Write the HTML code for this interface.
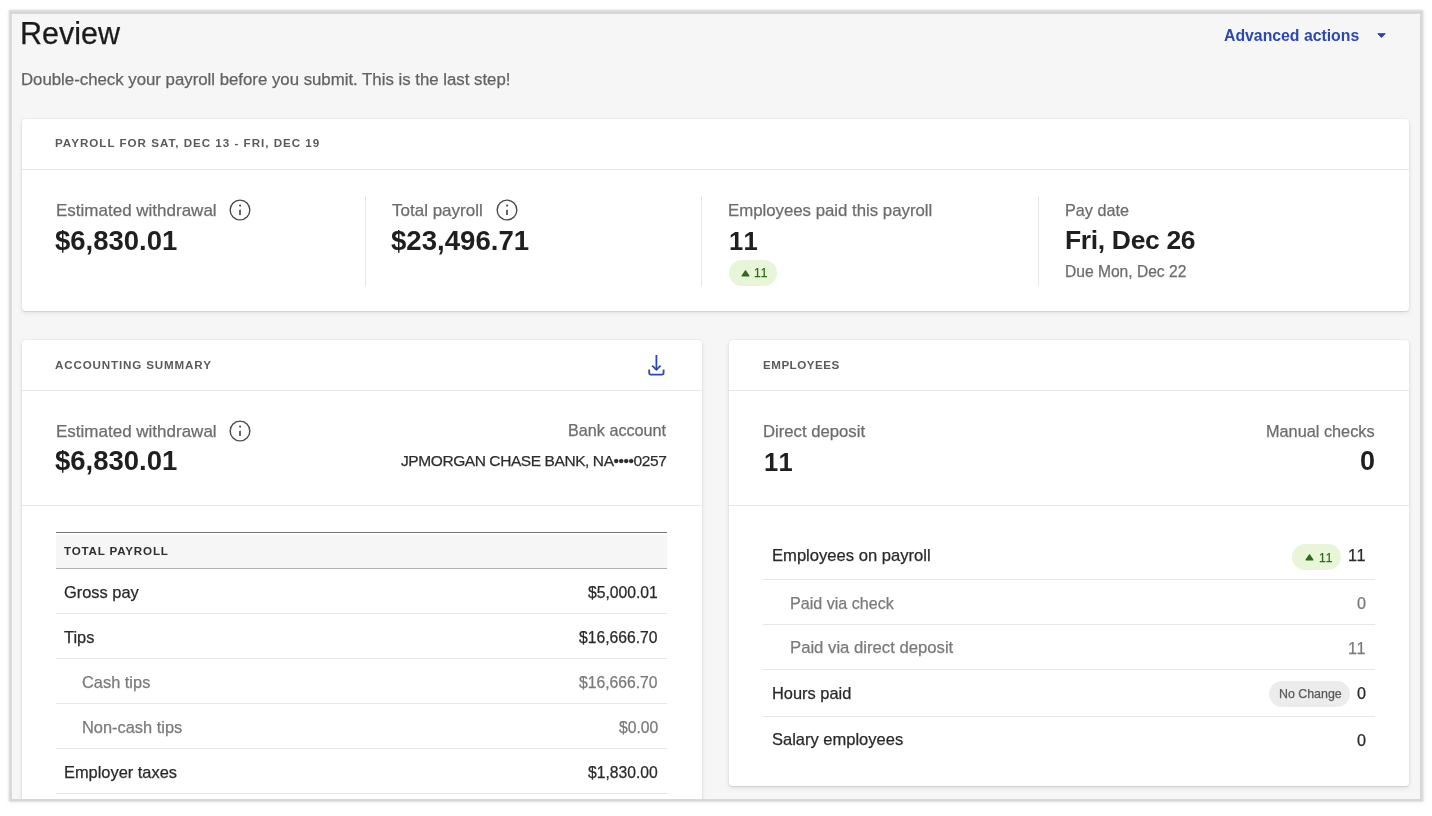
<!DOCTYPE html>
<html><head><meta charset="utf-8">
<style>
html,body{margin:0;padding:0;}
body{width:1432px;height:816px;position:relative;overflow:hidden;background:#fff;font-family:"Liberation Sans",sans-serif;}
.t{position:absolute;white-space:nowrap;will-change:transform;-webkit-text-stroke:0.25px currentColor;}
.r{position:absolute;}
.panel{position:absolute;left:12px;top:14px;width:1408px;height:785px;background:#f6f6f6;overflow:hidden;
 box-shadow:0 0 0 2.5px #d8d8d8, 0 -1px 1.5px 3px #dcdcdc, 0 -1px 3px 3.5px rgba(0,0,0,0.07), 0 0 4px 4px rgba(0,0,0,0.04);}
.card{position:absolute;background:#fff;border-radius:3.5px;box-shadow:0 1px 1px rgba(0,0,0,0.07),0 2px 5px rgba(0,0,0,0.09),0 0 2px rgba(0,0,0,0.09);}
.ico{position:absolute;}
</style></head><body>
<div class="panel"></div>
<div class="card" style="left:22px;top:119px;width:1387px;height:192px;"></div>
<div style="position:absolute;left:0;top:0;width:1432px;height:799px;overflow:hidden;"><div class="card" style="left:22px;top:340px;width:680px;height:520px;"></div></div>
<div class="card" style="left:729px;top:340px;width:680px;height:446px;"></div>
<div class="t" style="top:14.47px;font-size:30.5px;line-height:38.12px;color:#1b1b1b;left:20.20px;">Review</div>
<div class="t" style="top:68.68px;font-size:16.8px;line-height:21.0px;color:#626262;left:20.50px;">Double-check your payroll before you submit. This is the last step!</div>
<div class="t" style="top:25.65px;font-size:15.8px;line-height:19.75px;color:#2c48b0;font-weight:700;-webkit-text-stroke:0;left:1224.00px;">Advanced actions</div>
<svg class="ico" style="left:1376px;top:32px" width="11" height="7" viewBox="0 0 11 7"><path d="M1.8 1.7 L9.2 1.7 L5.5 5.5 Z" fill="#2c48b0" stroke="#2c48b0" stroke-width="1" stroke-linejoin="round"/></svg>
<div class="t" style="top:136.33px;font-size:11.6px;line-height:14.5px;color:#5a5a5a;font-weight:700;-webkit-text-stroke:0;letter-spacing:1.0px;left:55.00px;">PAYROLL FOR SAT, DEC 13 - FRI, DEC 19</div>
<div class="r" style="left:22px;top:169px;width:1387px;height:1px;background:#e6e6e6;"></div>
<div class="r" style="left:365px;top:196px;width:1px;height:90px;background:#e6e6e6;"></div>
<div class="r" style="left:701px;top:196px;width:1px;height:90px;background:#e6e6e6;"></div>
<div class="r" style="left:1038px;top:196px;width:1px;height:90px;background:#e6e6e6;"></div>
<div class="t" style="top:200.48px;font-size:17px;line-height:21.25px;color:#6c6c6c;left:55.50px;">Estimated withdrawal</div>
<svg class="ico" style="left:229.1px;top:198.6px" width="22" height="22" viewBox="0 0 22 22"><circle cx="11" cy="11" r="9.85" fill="none" stroke="#4a4a4a" stroke-width="1.4"/><path d="M10.15 10.9 L11.85 10.6 L11.85 16.1 L10.15 16.1 Z" fill="#4a4a4a"/><circle cx="11.1" cy="6.6" r="1.05" fill="#4a4a4a"/></svg>
<div class="t" style="top:200.48px;font-size:17px;line-height:21.25px;color:#6c6c6c;left:392.00px;">Total payroll</div>
<svg class="ico" style="left:495.8px;top:198.6px" width="22" height="22" viewBox="0 0 22 22"><circle cx="11" cy="11" r="9.85" fill="none" stroke="#4a4a4a" stroke-width="1.4"/><path d="M10.15 10.9 L11.85 10.6 L11.85 16.1 L10.15 16.1 Z" fill="#4a4a4a"/><circle cx="11.1" cy="6.6" r="1.05" fill="#4a4a4a"/></svg>
<div class="t" style="top:199.68px;font-size:16.8px;line-height:21.0px;color:#6c6c6c;left:728.00px;">Employees paid this payroll</div>
<div class="t" style="top:199.86px;font-size:16.2px;line-height:20.25px;color:#6c6c6c;left:1065.00px;">Pay date</div>
<div class="t" style="top:223.78px;font-size:27.5px;line-height:34.38px;color:#1f1f1f;font-weight:700;-webkit-text-stroke:0;left:54.50px;">$6,830.01</div>
<div class="t" style="top:223.69px;font-size:27.6px;line-height:34.5px;color:#1f1f1f;font-weight:700;-webkit-text-stroke:0;left:391.00px;">$23,496.71</div>
<div class="t" style="top:225.82px;font-size:25.5px;line-height:31.88px;color:#1f1f1f;font-weight:700;-webkit-text-stroke:0;letter-spacing:1.8px;left:729.00px;">11</div>
<div class="t" style="top:224.46px;font-size:26.5px;line-height:33.12px;color:#1f1f1f;font-weight:700;-webkit-text-stroke:0;letter-spacing:-0.35px;left:1064.50px;">Fri, Dec 26</div>
<div class="r" style="left:728.8px;top:260px;width:48px;height:26px;background:#e8f5d9;border-radius:13px;"></div>
<svg class="ico" style="left:741.3px;top:269.3px" width="10" height="9" viewBox="0 0 10 9"><path d="M1.1 6.9 L4.5 1.8 L7.9 6.9 Z" fill="#2e6a1d" stroke="#2e6a1d" stroke-width="1.2" stroke-linejoin="round"/></svg>
<div class="t" style="top:265.94px;font-size:12px;line-height:15.0px;color:#2e6a1d;letter-spacing:0.9px;left:754.00px;">11</div>
<div class="t" style="top:262.14px;font-size:15.6px;line-height:19.5px;color:#6c6c6c;left:1065.00px;">Due Mon, Dec 22</div>
<div style="position:absolute;left:0;top:0;width:1432px;height:799px;overflow:hidden;">
<div class="t" style="top:358.23px;font-size:11.6px;line-height:14.5px;color:#5a5a5a;font-weight:700;-webkit-text-stroke:0;letter-spacing:0.86px;left:55.00px;">ACCOUNTING SUMMARY</div>
<svg class="ico" style="left:646px;top:352px" width="22" height="26" viewBox="0 0 22 26"><path d="M10.4 3 V17.5" stroke="#2c48b0" stroke-width="1.8" fill="none"/><path d="M6.2 13.6 L10.4 17.8 L14.6 13.6" stroke="#2c48b0" stroke-width="1.8" fill="none"/><path d="M3.2 17.5 V20.8 Q3.2 22.6 5 22.6 H15.8 Q17.6 22.6 17.6 20.8 V17.5" stroke="#2c48b0" stroke-width="1.8" fill="none"/></svg>
<div class="r" style="left:22px;top:390px;width:680px;height:1px;background:#e6e6e6;"></div>
<div class="t" style="top:421.28px;font-size:17px;line-height:21.25px;color:#6c6c6c;left:55.50px;">Estimated withdrawal</div>
<svg class="ico" style="left:229.3px;top:419.7px" width="22" height="22" viewBox="0 0 22 22"><circle cx="11" cy="11" r="9.85" fill="none" stroke="#4a4a4a" stroke-width="1.4"/><path d="M10.15 10.9 L11.85 10.6 L11.85 16.1 L10.15 16.1 Z" fill="#4a4a4a"/><circle cx="11.1" cy="6.6" r="1.05" fill="#4a4a4a"/></svg>
<div class="t" style="top:444.48px;font-size:27.5px;line-height:34.38px;color:#1f1f1f;font-weight:700;-webkit-text-stroke:0;left:55.00px;">$6,830.01</div>
<div class="t" style="top:420.26px;font-size:16.2px;line-height:20.25px;color:#6c6c6c;right:765.50px;">Bank account</div>
<div class="t" style="top:451.44px;font-size:15.5px;line-height:19.38px;color:#2e2e2e;letter-spacing:-0.42px;right:765.50px;margin-right:0.42px;">JPMORGAN CHASE BANK, NA&bull;&bull;&bull;&bull;0257</div>
<div class="r" style="left:22px;top:505px;width:680px;height:1px;background:#e6e6e6;"></div>
<div class="r" style="left:56px;top:532.1px;width:611px;height:1.2999999999999545px;background:#777777;"></div>
<div class="r" style="left:56px;top:535px;width:611px;height:33.200000000000045px;background:#f6f6f6;"></div>
<div class="r" style="left:56px;top:568.2px;width:611px;height:1.1999999999999318px;background:#b0b0b0;"></div>
<div class="t" style="top:544.13px;font-size:11.6px;line-height:14.5px;color:#2e2e2e;font-weight:700;-webkit-text-stroke:0;letter-spacing:0.82px;left:63.80px;">TOTAL PAYROLL</div>
<div class="t" style="top:581.87px;font-size:16.4px;line-height:20.5px;color:#2a2a2a;left:64.00px;">Gross pay</div>
<div class="t" style="top:582.55px;font-size:15.7px;line-height:19.62px;color:#2a2a2a;right:774.00px;">$5,000.01</div>
<div class="r" style="left:56px;top:613px;width:611px;height:1px;background:#e6e6e6;"></div>
<div class="t" style="top:626.87px;font-size:16.4px;line-height:20.5px;color:#2a2a2a;left:64.00px;">Tips</div>
<div class="t" style="top:627.55px;font-size:15.7px;line-height:19.62px;color:#2a2a2a;right:774.00px;">$16,666.70</div>
<div class="r" style="left:56px;top:658px;width:611px;height:1px;background:#e6e6e6;"></div>
<div class="t" style="top:671.87px;font-size:16.4px;line-height:20.5px;color:#7a7a7a;left:81.50px;">Cash tips</div>
<div class="t" style="top:672.55px;font-size:15.7px;line-height:19.62px;color:#7a7a7a;right:774.00px;">$16,666.70</div>
<div class="r" style="left:56px;top:703px;width:611px;height:1px;background:#e6e6e6;"></div>
<div class="t" style="top:716.87px;font-size:16.4px;line-height:20.5px;color:#7a7a7a;left:81.50px;">Non-cash tips</div>
<div class="t" style="top:717.55px;font-size:15.7px;line-height:19.62px;color:#7a7a7a;right:774.00px;">$0.00</div>
<div class="r" style="left:56px;top:748px;width:611px;height:1px;background:#e6e6e6;"></div>
<div class="t" style="top:761.87px;font-size:16.4px;line-height:20.5px;color:#2a2a2a;left:64.00px;">Employer taxes</div>
<div class="t" style="top:762.55px;font-size:15.7px;line-height:19.62px;color:#2a2a2a;right:774.00px;">$1,830.00</div>
<div class="r" style="left:56px;top:793px;width:611px;height:1px;background:#e6e6e6;"></div>
</div>
<div class="t" style="top:358.33px;font-size:11.6px;line-height:14.5px;color:#5a5a5a;font-weight:700;-webkit-text-stroke:0;letter-spacing:0.5px;left:762.80px;">EMPLOYEES</div>
<div class="r" style="left:729px;top:390px;width:680px;height:1px;background:#e6e6e6;"></div>
<div class="t" style="top:422.27px;font-size:16.7px;line-height:20.88px;color:#6c6c6c;left:763.00px;">Direct deposit</div>
<div class="t" style="top:446.72px;font-size:25.5px;line-height:31.88px;color:#1f1f1f;font-weight:700;-webkit-text-stroke:0;letter-spacing:1.8px;left:764.00px;">11</div>
<div class="t" style="top:421.16px;font-size:16.3px;line-height:20.38px;color:#6c6c6c;right:57.50px;">Manual checks</div>
<div class="t" style="top:445.07px;font-size:27px;line-height:33.75px;color:#1f1f1f;font-weight:700;-webkit-text-stroke:0;right:57.00px;">0</div>
<div class="r" style="left:729px;top:505px;width:680px;height:1px;background:#e6e6e6;"></div>
<div class="t" style="top:545.87px;font-size:16.6px;line-height:20.75px;color:#2a2a2a;left:772.00px;">Employees on payroll</div>
<div class="r" style="left:1292.1px;top:544px;width:49px;height:26.3px;background:#e8f5d9;border-radius:13px;"></div>
<svg class="ico" style="left:1304.6px;top:553.3px" width="10" height="9" viewBox="0 0 10 9"><path d="M1.1 6.9 L4.5 1.8 L7.9 6.9 Z" fill="#2e6a1d" stroke="#2e6a1d" stroke-width="1.2" stroke-linejoin="round"/></svg>
<div class="t" style="top:550.94px;font-size:12px;line-height:15.0px;color:#2e6a1d;letter-spacing:0.9px;left:1318.70px;">11</div>
<div class="t" style="top:545.46px;font-size:16.2px;line-height:20.25px;color:#2a2a2a;letter-spacing:0.8px;right:66.00px;margin-right:-0.8px;">11</div>
<div class="r" style="left:763px;top:579px;width:612px;height:1px;background:#e6e6e6;"></div>
<div class="t" style="top:592.76px;font-size:16.1px;line-height:20.12px;color:#7a7a7a;left:789.50px;">Paid via check</div>
<div class="t" style="top:593.26px;font-size:16.2px;line-height:20.25px;color:#7a7a7a;right:66.00px;">0</div>
<div class="r" style="left:763px;top:624px;width:612px;height:1px;background:#e6e6e6;"></div>
<div class="t" style="top:637.57px;font-size:16.7px;line-height:20.88px;color:#7a7a7a;left:789.50px;">Paid via direct deposit</div>
<div class="t" style="top:638.26px;font-size:16.2px;line-height:20.25px;color:#7a7a7a;letter-spacing:0.8px;right:66.00px;margin-right:-0.8px;">11</div>
<div class="r" style="left:763px;top:669px;width:612px;height:1px;background:#e6e6e6;"></div>
<div class="t" style="top:682.67px;font-size:16.4px;line-height:20.5px;color:#2a2a2a;left:772.00px;">Hours paid</div>
<div class="r" style="left:1269px;top:681px;width:81px;height:26px;background:#ececec;border-radius:13px;"></div>
<div class="t" style="top:686.55px;font-size:12.4px;line-height:15.5px;color:#5a5a5a;left:1278.50px;">No Change</div>
<div class="t" style="top:683.26px;font-size:16.2px;line-height:20.25px;color:#2a2a2a;right:66.00px;">0</div>
<div class="r" style="left:763px;top:716px;width:612px;height:1px;background:#e6e6e6;"></div>
<div class="t" style="top:729.27px;font-size:16.5px;line-height:20.62px;color:#2a2a2a;left:772.00px;">Salary employees</div>
<div class="t" style="top:730.06px;font-size:16.2px;line-height:20.25px;color:#2a2a2a;right:66.00px;">0</div>
</body></html>
